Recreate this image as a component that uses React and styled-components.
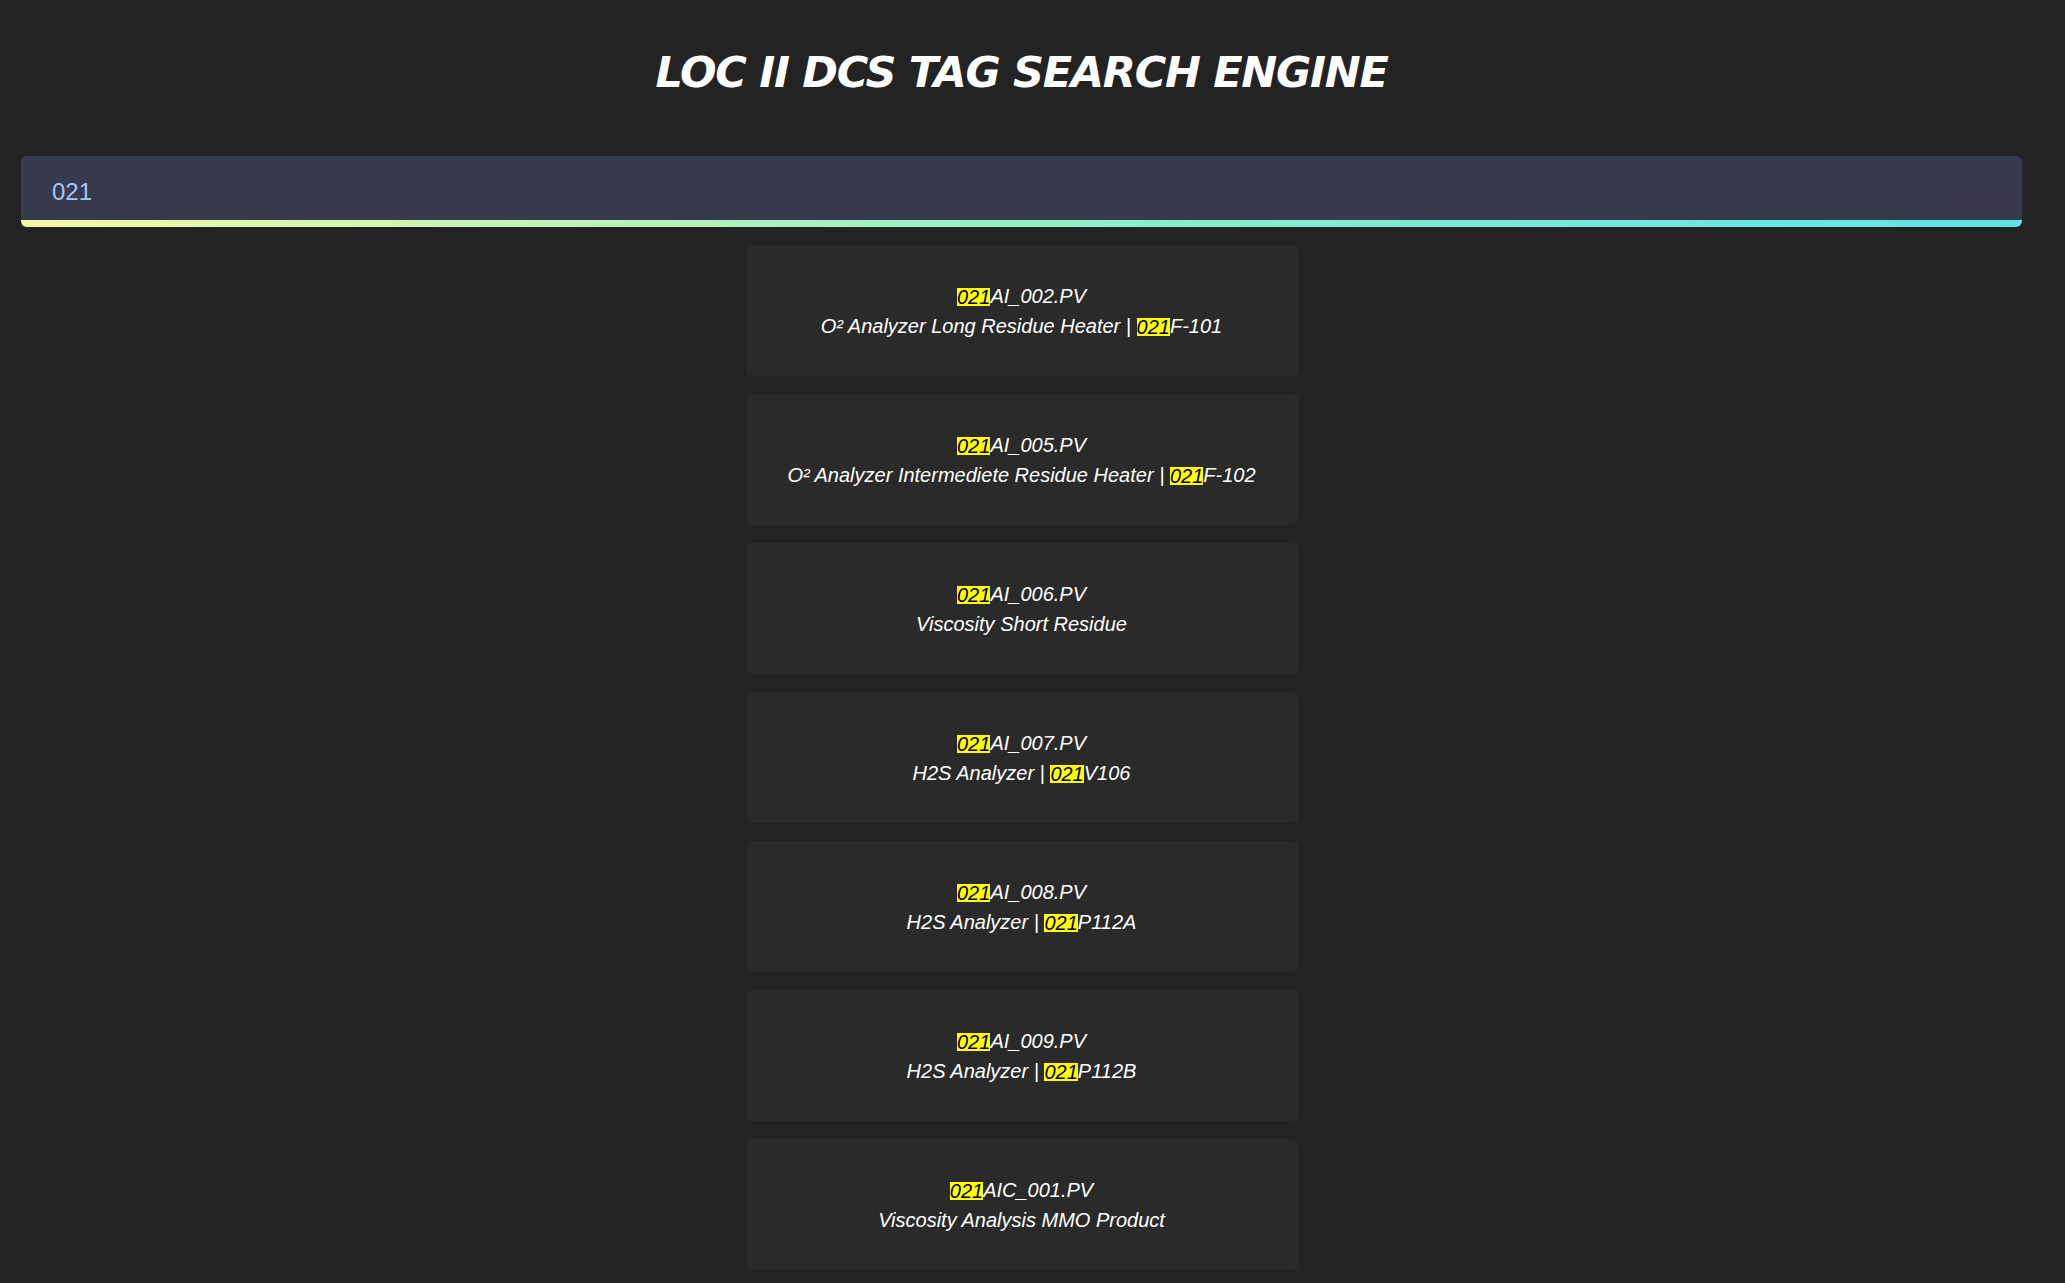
import React, { useState } from 'react'
import styled, { createGlobalStyle } from 'styled-components'

const GlobalStyle = createGlobalStyle`
  html, body {
    margin: 0;
    padding: 0;
    background: #232323;
  }
  body {
    font-family: "Liberation Sans", Arial, sans-serif;
    color: #fff;
  }
`

const Page = styled.div`
  min-height: 1283px;
  padding: 0 43px 0 21px;
  display: flex;
  flex-direction: column;
  align-items: center;
`

const Title = styled.h1`
  margin: 0;
  padding-top: 46px;
  height: 156px;
  box-sizing: border-box;
  font-family: Verdana, "DejaVu Sans", sans-serif;
  font-style: italic;
  font-weight: bold;
  font-size: 43px;
  letter-spacing: -1.3px;
  line-height: 52px;
  color: #fff;
  text-align: center;
`

const SearchBox = styled.div`
  width: 100%;
  height: 71px;
  box-sizing: border-box;
  background: #363a4c;
  border-radius: 6px;
  overflow: hidden;
  display: flex;
  flex-direction: column;
`

const Input = styled.input`
  flex: 1;
  border: 0;
  outline: none;
  background: transparent;
  padding: 7px 31px 0;
  font-family: "Liberation Sans", Arial, sans-serif;
  font-size: 24px;
  color: #a8c6f6;
  caret-color: #a8c6f6;
`

const GlowBar = styled.div`
  height: 7px;
  background: linear-gradient(90deg, #f4f8a6 0%, #93eec6 50%, #5ce4e6 100%);
`

const Results = styled.ul`
  list-style: none;
  margin: 18px 0 0;
  padding: 0;
  width: 552px;
  display: flex;
  flex-direction: column;
  gap: 18px;
`

const Card = styled.li`
  height: 131px;
  box-sizing: border-box;
  background: #2a2a2a;
  border-radius: 6px;
  display: flex;
  flex-direction: column;
  justify-content: center;
  align-items: center;
  font-style: italic;
  font-size: 20px;
  line-height: 30px;
  color: #fff;
  text-align: center;
`

const Line = styled.div`
  white-space: nowrap;
`

const Hit = styled.mark`
  display: inline-block;
  background: #ffff00;
  color: #000;
  line-height: 18px;
  height: 18px;
  vertical-align: -1px;
`

const tags = [
  { tag: '021AI_002.PV', desc: 'O² Analyzer Long Residue Heater | 021F-101' },
  { tag: '021AI_005.PV', desc: 'O² Analyzer Intermediete Residue Heater | 021F-102' },
  { tag: '021AI_006.PV', desc: 'Viscosity Short Residue' },
  { tag: '021AI_007.PV', desc: 'H2S Analyzer | 021V106' },
  { tag: '021AI_008.PV', desc: 'H2S Analyzer | 021P112A' },
  { tag: '021AI_009.PV', desc: 'H2S Analyzer | 021P112B' },
  { tag: '021AIC_001.PV', desc: 'Viscosity Analysis MMO Product' },
]

function Highlight({ text, query }) {
  if (!query) return text
  const parts = text.split(query)
  return parts.map((p, i) => (
    <React.Fragment key={i}>
      {i > 0 && <Hit>{query}</Hit>}
      {p}
    </React.Fragment>
  ))
}

export default function App() {
  const [query, setQuery] = useState('021')

  const found = tags.filter(
    (t) => t.tag.includes(query) || t.desc.includes(query)
  )

  return (
    <>
      <GlobalStyle />
      <Page>
        <Title>LOC II DCS TAG SEARCH ENGINE</Title>
        <SearchBox>
          <Input
            autoFocus
            value={query}
            onChange={(e) => setQuery(e.target.value)}
          />
          <GlowBar />
        </SearchBox>
        <Results>
          {found.map((t) => (
            <Card key={t.tag}>
              <Line>
                <Highlight text={t.tag} query={query} />
              </Line>
              <Line>
                <Highlight text={t.desc} query={query} />
              </Line>
            </Card>
          ))}
        </Results>
      </Page>
    </>
  )
}
